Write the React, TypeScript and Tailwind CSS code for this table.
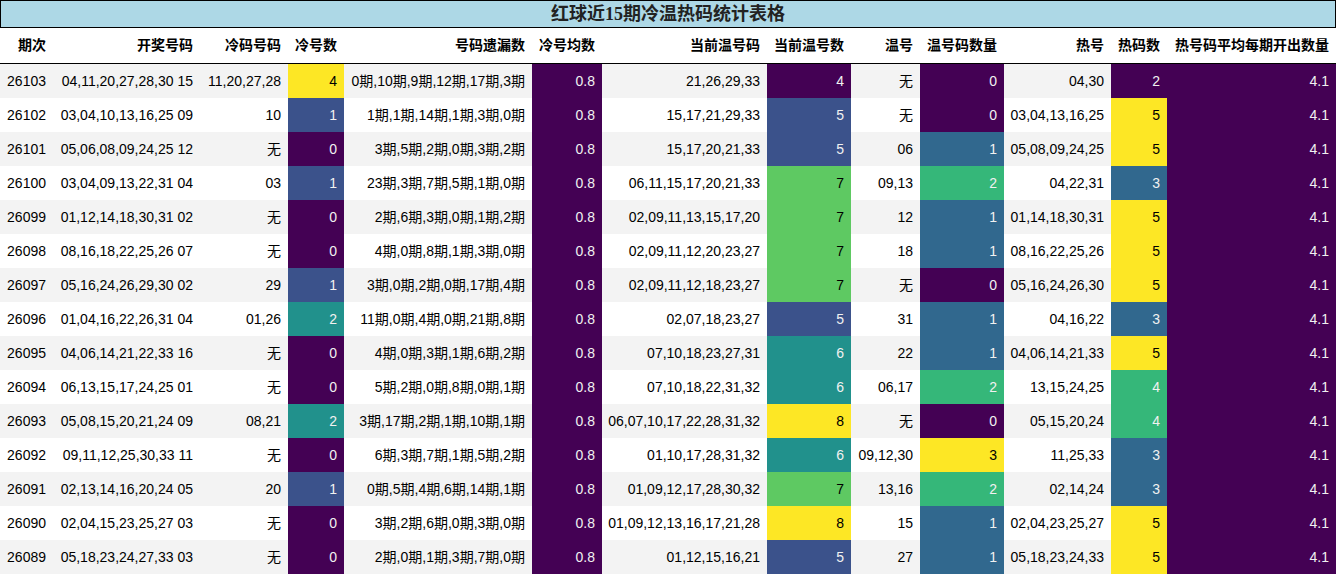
import React from "react"

const cols = "grid-cols-[53px_147px_88px_56px_188px_70px_165px_84px_69px_84px_107px_56px_169px]"

const headers = [
  "期次",
  "开奖号码",
  "冷码号码",
  "冷号数",
  "号码遗漏数",
  "冷号均数",
  "当前温号码",
  "当前温号数",
  "温号",
  "温号码数量",
  "热号",
  "热码数",
  "热号码平均每期开出数量",
]

// issue, draw, cold, coldN, miss, warm, warmN, warmNo, warmCnt, hot, hotN
const rows: [string, string, string, number, string, string, number, string, number, string, number][] = [
  ["26103", "04,11,20,27,28,30 15", "11,20,27,28", 4, "0期,10期,9期,12期,17期,3期", "21,26,29,33", 4, "无", 0, "04,30", 2],
  ["26102", "03,04,10,13,16,25 09", "10", 1, "1期,1期,14期,1期,3期,0期", "15,17,21,29,33", 5, "无", 0, "03,04,13,16,25", 5],
  ["26101", "05,06,08,09,24,25 12", "无", 0, "3期,5期,2期,0期,3期,2期", "15,17,20,21,33", 5, "06", 1, "05,08,09,24,25", 5],
  ["26100", "03,04,09,13,22,31 04", "03", 1, "23期,3期,7期,5期,1期,0期", "06,11,15,17,20,21,33", 7, "09,13", 2, "04,22,31", 3],
  ["26099", "01,12,14,18,30,31 02", "无", 0, "2期,6期,3期,0期,1期,2期", "02,09,11,13,15,17,20", 7, "12", 1, "01,14,18,30,31", 5],
  ["26098", "08,16,18,22,25,26 07", "无", 0, "4期,0期,8期,1期,3期,0期", "02,09,11,12,20,23,27", 7, "18", 1, "08,16,22,25,26", 5],
  ["26097", "05,16,24,26,29,30 02", "29", 1, "3期,0期,2期,0期,17期,4期", "02,09,11,12,18,23,27", 7, "无", 0, "05,16,24,26,30", 5],
  ["26096", "01,04,16,22,26,31 04", "01,26", 2, "11期,0期,4期,0期,21期,8期", "02,07,18,23,27", 5, "31", 1, "04,16,22", 3],
  ["26095", "04,06,14,21,22,33 16", "无", 0, "4期,0期,3期,1期,6期,2期", "07,10,18,23,27,31", 6, "22", 1, "04,06,14,21,33", 5],
  ["26094", "06,13,15,17,24,25 01", "无", 0, "5期,2期,0期,8期,0期,1期", "07,10,18,22,31,32", 6, "06,17", 2, "13,15,24,25", 4],
  ["26093", "05,08,15,20,21,24 09", "08,21", 2, "3期,17期,2期,1期,10期,1期", "06,07,10,17,22,28,31,32", 8, "无", 0, "05,15,20,24", 4],
  ["26092", "09,11,12,25,30,33 11", "无", 0, "6期,3期,7期,1期,5期,2期", "01,10,17,28,31,32", 6, "09,12,30", 3, "11,25,33", 3],
  ["26091", "02,13,14,16,20,24 05", "20", 1, "0期,5期,4期,6期,14期,1期", "01,09,12,17,28,30,32", 7, "13,16", 2, "02,14,24", 3],
  ["26090", "02,04,15,23,25,27 03", "无", 0, "3期,2期,6期,0期,3期,0期", "01,09,12,13,16,17,21,28", 8, "15", 1, "02,04,23,25,27", 5],
  ["26089", "05,18,23,24,27,33 03", "无", 0, "2期,0期,1期,3期,7期,0期", "01,12,15,16,21", 5, "27", 1, "05,18,23,24,33", 5],
]

// viridis steps, written out so tailwind sees every class
const coldCls: Record<number, string> = {
  0: "bg-[#440154] text-[#f1f1f1]",
  1: "bg-[#3b528b] text-[#f1f1f1]",
  2: "bg-[#21918c] text-[#f1f1f1]",
  3: "bg-[#5ec962] text-black",
  4: "bg-[#fde725] text-black",
}
const warmCls: Record<number, string> = {
  4: "bg-[#440154] text-[#f1f1f1]",
  5: "bg-[#3b528b] text-[#f1f1f1]",
  6: "bg-[#21918c] text-[#f1f1f1]",
  7: "bg-[#5ec962] text-black",
  8: "bg-[#fde725] text-black",
}
const warmCntCls: Record<number, string> = {
  0: "bg-[#440154] text-[#f1f1f1]",
  1: "bg-[#31688e] text-[#f1f1f1]",
  2: "bg-[#35b779] text-[#f1f1f1]",
  3: "bg-[#fde725] text-black",
}
const hotCls: Record<number, string> = {
  2: "bg-[#440154] text-[#f1f1f1]",
  3: "bg-[#31688e] text-[#f1f1f1]",
  4: "bg-[#35b779] text-[#f1f1f1]",
  5: "bg-[#fde725] text-black",
}
const flat = "bg-[#440154] text-[#f1f1f1]"

function Cell({ children, className = "" }: { children: React.ReactNode; className?: string }) {
  return (
    <div className={`flex items-center justify-end px-[7px] whitespace-nowrap ${className}`}>{children}</div>
  )
}

export default function App() {
  return (
    <div className="w-[1336px] bg-white text-[14px] text-black font-['Liberation_Sans','Noto_Sans_CJK_SC',sans-serif]">
      {/* Caption */}
      <div className="h-[28px] border border-black bg-[#add8e6] flex items-center justify-center">
        <span className="text-[18px] font-bold leading-none text-[#222] font-['Liberation_Serif','Noto_Sans_CJK_SC',serif]">
          红球近15期冷温热码统计表格
        </span>
      </div>

      {/* Header */}
      <div className={`grid ${cols} h-[36px] border-b border-black`}>
        {headers.map((h) => (
          <Cell key={h} className="font-bold">
            {h}
          </Cell>
        ))}
      </div>

      {/* Body */}
      {rows.map((r, i) => (
        <div key={r[0]} className={`grid ${cols} h-[34px] ${i % 2 === 0 ? "bg-[#f3f3f3]" : "bg-white"}`}>
          <Cell>{r[0]}</Cell>
          <Cell>{r[1]}</Cell>
          <Cell>{r[2]}</Cell>
          <Cell className={coldCls[r[3]]}>{r[3]}</Cell>
          <Cell>{r[4]}</Cell>
          <Cell className={flat}>0.8</Cell>
          <Cell>{r[5]}</Cell>
          <Cell className={warmCls[r[6]]}>{r[6]}</Cell>
          <Cell>{r[7]}</Cell>
          <Cell className={warmCntCls[r[8]]}>{r[8]}</Cell>
          <Cell>{r[9]}</Cell>
          <Cell className={hotCls[r[10]]}>{r[10]}</Cell>
          <Cell className={flat}>4.1</Cell>
        </div>
      ))}
    </div>
  )
}
